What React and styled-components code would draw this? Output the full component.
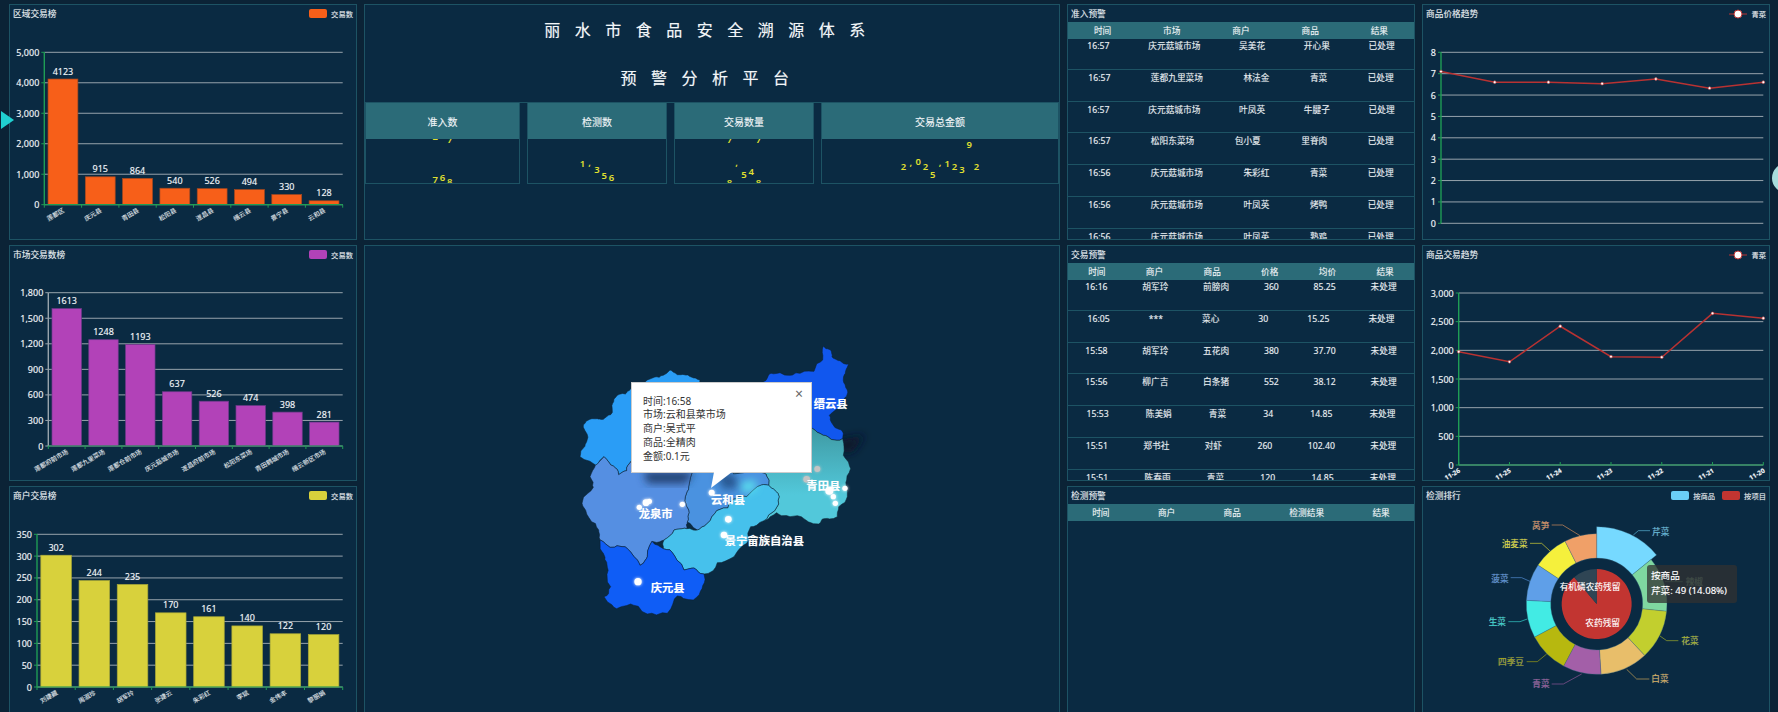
import React from 'react';
import styled, { createGlobalStyle } from 'styled-components';

const FONT = '"Noto Sans", "Noto Sans CJK SC", sans-serif';
const GRID = '#97a3ac';
const GREEN = '#1f9d55';
const RED = '#b83232';

const areaBars = [
  ['莲都区', 4123], ['庆元县', 915], ['青田县', 864], ['松阳县', 540],
  ['遂昌县', 526], ['缙云县', 494], ['景宁县', 330], ['云和县', 128],
];
const marketBars = [
  ['莲都府前市场', 1613], ['莲都九里菜场', 1248], ['莲都仓前市场', 1193], ['庆元菇城市场', 637],
  ['遂昌府前市场', 526], ['松阳东菜场', 474], ['青田鹤城市场', 398], ['缙云新区市场', 281],
];
const merchantBars = [
  ['刘建藏', 302], ['周淑珍', 244], ['胡军玲', 235], ['张建云', 170],
  ['朱彩红', 161], ['李斌', 140], ['金伟丰', 122], ['黎丽娟', 120],
];

const entryRows = [
  ['16:57', '庆元菇城市场', '吴美花', '开心果', '已处理'],
  ['16:57', '莲都九里菜场', '林法金', '青菜', '已处理'],
  ['16:57', '庆元菇城市场', '叶凤英', '牛腱子', '已处理'],
  ['16:57', '松阳东菜场', '包小夏', '里脊肉', '已处理'],
  ['16:56', '庆元菇城市场', '朱彩红', '青菜', '已处理'],
  ['16:56', '庆元菇城市场', '叶凤英', '烤鸭', '已处理'],
  ['16:56', '庆元菇城市场', '叶凤英', '熟鸡', '已处理'],
];
const tradeRows = [
  ['16:16', '胡军玲', '前膀肉', '360', '85.25', '未处理'],
  ['16:05', '***', '菜心', '30', '15.25', '未处理'],
  ['15:58', '胡军玲', '五花肉', '380', '37.70', '未处理'],
  ['15:56', '柳广吉', '白条猪', '552', '38.12', '未处理'],
  ['15:53', '陈美娟', '青菜', '34', '14.85', '未处理'],
  ['15:51', '郑书社', '对虾', '260', '102.40', '未处理'],
  ['15:51', '陈春雨', '青菜', '120', '14.85', '未处理'],
];

// frozen mid-roll: each column holds one or two glyphs with their y offset from the cell centre
const stats = [
  { label: '准入数', cols: [[['7', 18.5], ['2', -24]], [['6', 16.5]], [['8', 20.5], ['7', -21]]] },
  { label: '检测数', cols: [[['1', 2.5]], [[',', 2]], [['3', 8.5]], [['5', 14.5]], [['6', 16.5]]] },
  { label: '交易数量', cols: [[['8', 21.5], ['7', -21.5]], [[',', 2]], [['5', 13.5]], [['4', 10.5]], [['8', 21.5], ['7', -21.5]]] },
  {
    label: '交易总金额',
    cols: [[['2', 5.5]], [[',', 2]], [['0', 0.5]], [['2', 5.5]], [['5', 13.5]], [[',', 2]], [['1', 2.5]], [['2', 5.5]], [['3', 8.5]], [['9', -16.5]], [['2', 5.5]]],
  },
];

const regions = [
  { fill: '#2a9df6', pts: '60,350 72,322 82,298 70,262 78,244 112,236 130,238 152,224 158,190 168,170 196,162 212,146 240,142 262,120 298,112 330,90 352,104 372,104 396,112 420,120 430,260 400,340 300,370 215,362 200,392 176,404 160,378 132,350 108,376' },
  { fill: '#1157ee', pts: '790,18 812,30 816,50 840,62 866,72 856,100 850,122 862,150 850,182 838,206 808,226 816,250 844,270 848,296 824,300 790,286 757,265 640,200 610,125 628,102 660,98 690,106 720,100 762,94 788,60' },
  { fill: 'url(#tealFade)', pts: '640,200 757,265 790,286 824,300 848,296 850,346 872,386 860,420 862,470 836,500 832,530 792,536 776,552 746,546 690,530 650,518 612,542 656,492 650,456 626,436 618,402 560,404 520,402' },
  { fill: '#4a92e0', pts: '400,340 640,200 520,402 618,402 626,436 592,440 560,470 520,478 470,512 440,552 412,570 382,546 386,510 376,470 386,440' },
  { fill: '#558fe2', pts: '132,350 160,378 176,404 200,392 215,362 300,370 400,340 386,440 376,470 386,510 382,546 380,566 342,570 312,600 276,604 262,650 240,676 212,636 186,620 150,622 120,600 116,570 86,532 66,490 100,442 90,410 106,376' },
  { fill: '#46c1ec', pts: '312,600 342,570 380,566 412,570 440,552 470,512 520,478 560,470 592,440 626,436 650,456 656,492 612,542 572,560 560,610 522,650 472,668 432,702 402,684 372,690 340,642 310,626' },
  { fill: '#0f5df6', pts: '120,600 150,622 186,620 212,636 240,676 262,650 276,604 310,626 340,642 372,690 402,684 432,702 426,746 400,780 352,768 322,820 262,822 212,792 170,806 132,770 152,740 142,682 130,640' },
];
const mapLabels = [
  ['缙云县', 812, 190], ['青田县', 790, 435], ['云和县', 504, 477],
  ['龙泉市', 287, 520], ['景宁畲族自治县', 613, 602], ['庆元县', 323, 743],
];
const mapDots = [
  [455, 458, 9], [238, 502, 8], [258, 488, 10], [268, 484, 8], [367, 493, 8], [505, 538, 10], [492, 585, 10],
  [234, 725, 11], [855, 445, 8], [808, 452, 12], [820, 470, 8], [826, 490, 8],
];

const outerSlices = [
  { name: '芹菜', color: '#76d9ff', text: '#5bb7d9', from: 0, to: 50.7, grown: true, lead: '640,165 655,152 690,152', x: 722, y: 155 },
  { name: '辣椒', color: '#7fd8a0', text: '#5f9b7a', from: 50.7, to: 96, lead: '735,305 760,305 788,305', x: 823, y: 305 },
  { name: '花菜', color: '#c2cf2e', text: '#a5b12a', from: 96, to: 137, lead: '720,468 740,482 775,482', x: 810, y: 482 },
  { name: '白菜', color: '#e8be6a', text: '#d0a858', from: 137, to: 176.5, lead: '620,568 650,597 688,597', x: 720, y: 597 },
  { name: '青菜', color: '#a35fa8', text: '#95569a', from: 176.5, to: 208, lead: '485,582 430,612 395,612', x: 363, y: 612 },
  { name: '四季豆', color: '#b7b80f', text: '#a3a414', from: 208, to: 242, lead: '380,522 352,545 320,545', x: 273, y: 545 },
  { name: '生菜', color: '#42ebe4', text: '#36d4ce', from: 242, to: 273, lead: '322,417 300,425 265,425', x: 232, y: 425 },
  { name: '菠菜', color: '#5f9fe8', text: '#5590d8', from: 273, to: 303.6, lead: '332,305 305,293 272,293', x: 240, y: 296 },
  { name: '油麦菜', color: '#f5f03c', text: '#ddd835', from: 303.6, to: 333.3, lead: '390,213 365,190 330,190', x: 284, y: 192 },
  { name: '莴笋', color: '#f0a068', text: '#d98f5a', from: 333.3, to: 360, lead: '480,167 428,135 395,135', x: 362, y: 137 },
];

function polar(cx, cy, r, deg) {
  const a = (deg - 90) * Math.PI / 180;
  return [cx + r * Math.cos(a), cy + r * Math.sin(a)];
}

function arcPath(cx, cy, r0, r1, from, to) {
  const large = to - from > 180 ? 1 : 0;
  const [ax, ay] = polar(cx, cy, r1, from);
  const [bx, by] = polar(cx, cy, r1, to);
  const [cx2, cy2] = polar(cx, cy, r0, to);
  const [dx, dy] = polar(cx, cy, r0, from);
  return `M${ax} ${ay}A${r1} ${r1} 0 ${large} 1 ${bx} ${by}L${cx2} ${cy2}A${r0} ${r0} 0 ${large} 0 ${dx} ${dy}Z`;
}

function noise(x, y) {
  const s = Math.sin(x * 12.9898 + y * 78.233) * 43758.5453;
  return s - Math.floor(s) - 0.5;
}

// county borders: midpoint displacement keyed on the midpoint, so shared edges stay shared
function roughEdge(a, b, depth) {
  if (depth === 0) return [];
  const mx = (a[0] + b[0]) / 2;
  const my = (a[1] + b[1]) / 2;
  const len = Math.hypot(b[0] - a[0], b[1] - a[1]);
  const mid = [mx + noise(mx, my) * len * 0.3, my + noise(my, mx) * len * 0.3];
  return [...roughEdge(a, mid, depth - 1), mid, ...roughEdge(mid, b, depth - 1)];
}

function roughen(pts) {
  const list = pts.split(' ').map((p) => p.split(',').map(Number));
  const out = [];
  list.forEach((p, i) => {
    out.push(p, ...roughEdge(p, list[(i + 1) % list.length], 2));
  });
  return out.map((p) => p.map((n) => n.toFixed(1)).join(',')).join(' ');
}

function YAxis({ box, max, step, color }) {
  const ticks = [];
  for (let v = 0; v <= max; v += step) ticks.push(v);
  return (
    <>
      {ticks.map((v) => {
        const y = box.bottom - (v / max) * (box.bottom - box.top);
        return (
          <g key={v}>
            <line x1={box.left} x2={box.right} y1={y} y2={y} stroke={GRID} />
            <line x1={box.left - 3} x2={box.left} y1={y} y2={y} stroke={color} />
            <TickText x={box.left - 5} y={y}>{v.toLocaleString('en-US')}</TickText>
          </g>
        );
      })}
      <line x1={box.left} x2={box.left} y1={box.top} y2={box.bottom} stroke={color} strokeWidth="1.4" />
    </>
  );
}

// svg coordinates are relative to the panel's top left corner
function ChartSvg({ children }) {
  return <Plot viewBox="1 18 346 217">{children}</Plot>;
}

function BarChart({ box, max, step, data, color, edge, yColor = GREEN }) {
  const band = (box.right - box.left) / data.length;
  const h = box.bottom - box.top;
  return (
    <ChartSvg>
      <YAxis box={box} max={max} step={step} color={yColor} />
      {data.map(([name, value], i) => {
        const barH = (value / max) * h;
        const x = box.left + band * i;
        const mid = x + band / 2;
        return (
          <g key={name}>
            <rect x={x + band * 0.1} y={box.bottom - barH} width={band * 0.8} height={barH} fill={color} stroke={edge} strokeWidth="0.7" />
            <DataText x={mid} y={box.bottom - barH - 4.5}>{value}</DataText>
            <AxisText x={mid + 2} y={box.bottom + 7} transform={`rotate(-30 ${mid + 2} ${box.bottom + 7})`}>{name}</AxisText>
            <line x1={x} x2={x} y1={box.bottom} y2={box.bottom + 3} stroke={GREEN} />
          </g>
        );
      })}
      <line x1={box.right} x2={box.right} y1={box.bottom} y2={box.bottom + 3} stroke={GREEN} />
      <line x1={box.left} x2={box.right} y1={box.bottom} y2={box.bottom} stroke={GREEN} strokeWidth="1.2" />
    </ChartSvg>
  );
}

function LineChart({ box, max, step, values, labels }) {
  const pitch = (box.right - box.left) / (values.length - 1);
  const pts = values.map((v, i) => [box.left + pitch * i, box.bottom - (v / max) * (box.bottom - box.top)]);
  return (
    <ChartSvg>
      <YAxis box={box} max={max} step={step} color={GREEN} />
      {labels && (
        <line x1={box.left} x2={box.right} y1={box.bottom} y2={box.bottom} stroke={GREEN} strokeWidth="1.2" />
      )}
      {labels && labels.map((name, i) => (
        <g key={name}>
          <line x1={pts[i][0]} x2={pts[i][0]} y1={box.bottom} y2={box.bottom - 3} stroke={GREEN} />
          <DateText x={pts[i][0] + 2} y={box.bottom + 7} transform={`rotate(-30 ${pts[i][0] + 2} ${box.bottom + 7})`}>{name}</DateText>
        </g>
      ))}
      <polyline points={pts.map((p) => p.join(',')).join(' ')} fill="none" stroke={RED} strokeWidth="1.5" />
      {pts.map(([x, y]) => (
        <circle key={x} cx={x} cy={y} r="1.4" fill="#fff" stroke={RED} strokeWidth="0.6" />
      ))}
    </ChartSvg>
  );
}

function Donut() {
  const cx = 530;
  const cy = 372;
  return (
    <Plot viewBox="9 72 1038 651">
      {outerSlices.map((s) => (
        <g key={s.name}>
          <path d={arcPath(cx, cy, 138, s.grown ? 232 : 211, s.from, s.to)} fill={s.color} stroke="#3b6d86" strokeWidth="1" />
          <polyline points={s.lead} fill="none" stroke={s.text} strokeWidth="2" />
          <SliceText x={s.x} y={s.y} fill={s.text}>{s.name}</SliceText>
        </g>
      ))}
      <path d={arcPath(cx, cy, 0, 105, 0, 320)} fill="#c23531" />
      <path d={arcPath(cx, cy, 0, 105, 320, 360)} fill="#2f4554" />
      <SliceText x={510} y={320} fill="#fff">有机磷农药残留</SliceText>
      <SliceText x={548} y={430} fill="#fff">农药残留</SliceText>
    </Plot>
  );
}

function BarLegend({ color, children }) {
  return (
    <Legend>
      <Swatch $color={color} />
      {children}
    </Legend>
  );
}

function LineLegend() {
  return (
    <Legend>
      <svg width="18" height="10" viewBox="0 0 18 10">
        <line x1="0" x2="18" y1="5" y2="5" stroke={RED} />
        <circle cx="9" cy="5" r="4" fill="#fff" stroke={RED} />
      </svg>
      青菜
    </Legend>
  );
}

function ChartPanel({ title, legend, children }) {
  return (
    <Panel>
      <Head>
        <Title>{title}</Title>
        {legend}
      </Head>
      {children}
    </Panel>
  );
}

function TablePanel({ title, columns, rows }) {
  return (
    <Panel>
      <Head>
        <Title>{title}</Title>
      </Head>
      <TableHead>
        {columns.map((c) => <span key={c}>{c}</span>)}
      </TableHead>
      <TableBody>
        {rows.map((row, i) => (
          <TableRow key={i}>
            {row.map((c, j) => <span key={j}>{c}</span>)}
          </TableRow>
        ))}
      </TableBody>
    </Panel>
  );
}

function MapView() {
  return (
    <MapWrap>
      <MapSvg viewBox="0 0 960 870">
        <defs>
          <linearGradient id="tealFade" x1="0" y1="0" x2="0" y2="1">
            <stop offset="0" stopColor="#37878f" />
            <stop offset="0.35" stopColor="#45a8b4" />
            <stop offset="0.75" stopColor="#52c8da" />
          </linearGradient>
          <filter id="soft" x="-40%" y="-40%" width="180%" height="180%">
            <feGaussianBlur stdDeviation="12" />
          </filter>
          <filter id="glow" x="-80%" y="-80%" width="260%" height="260%">
            <feGaussianBlur stdDeviation="4" result="halo" />
            <feMerge>
              <feMergeNode in="halo" />
              <feMergeNode in="SourceGraphic" />
            </feMerge>
          </filter>
        </defs>
        <polygon points="828,300 915,285 880,335 842,340" fill="#08182a" filter="url(#soft)" />
        {regions.map((r) => (
          <polygon key={r.pts} points={roughen(r.pts)} fill={r.fill} stroke="#0b2030" strokeWidth="1.6" strokeLinejoin="round" />
        ))}
        <polygon points="250,395 400,395 380,430 262,430" fill="#223f6e" filter="url(#soft)" />
        <polygon points="470,400 520,400 540,440 490,450" fill="#28578f" filter="url(#soft)" />
        <polygon points="540,430 585,420 590,445 552,462" fill="#5ce6ee" filter="url(#soft)" />
        <circle cx="772" cy="387" r="9" fill="#c4c4c4" filter="url(#glow)" />
        <circle cx="740" cy="418" r="10" fill="#c4c4c4" filter="url(#glow)" />
        {mapDots.map(([x, y, r]) => (
          <circle key={`${x}-${y}`} cx={x} cy={y} r={r} fill="#fff" filter="url(#glow)" />
        ))}
        {mapLabels.map(([name, x, y]) => (
          <MapText key={name} x={x} y={y}>{name}</MapText>
        ))}
      </MapSvg>
      <Popup>
        <PopupClose>×</PopupClose>
        <div>时间:16:58</div>
        <div>市场:云和县菜市场</div>
        <div>商户:吴式平</div>
        <div>商品:全精肉</div>
        <div>金额:0.1元</div>
        <PopupTip viewBox="0 0 24 18">
          <polygon points="4,0 22,0 1,16" fill="#fff" />
        </PopupTip>
      </Popup>
    </MapWrap>
  );
}

export default function App() {
  return (
    <>
      <GlobalStyle />
      <Page>
        <ChartPanel title="区域交易榜" legend={<BarLegend color="#f75f19">交易数</BarLegend>}>
          <BarChart box={{ left: 35.3, top: 48.3, bottom: 200.7, right: 333.7 }} max={5000} step={1000} data={areaBars} color="#f75f19" edge="#a8491f" />
        </ChartPanel>

        <Panel>
          <Heading>
            <div>丽水市食品安全溯源体系</div>
            <div>预警分析平台</div>
          </Heading>
          <StatRow>
            {stats.map((s) => (
              <Stat key={s.label}>
                <StatHead>{s.label}</StatHead>
                <StatValue>
                  {s.cols.map((col, i) => (
                    <DigitCol key={i}>
                      {col.map(([glyph, y], j) => <Digit key={j} $y={y}>{glyph}</Digit>)}
                    </DigitCol>
                  ))}
                </StatValue>
              </Stat>
            ))}
          </StatRow>
        </Panel>

        <TablePanel title="准入预警" columns={['时间', '市场', '商户', '商品', '结果']} rows={entryRows} />

        <ChartPanel title="商品价格趋势" legend={<LineLegend />}>
          <LineChart box={{ left: 19, top: 48.3, bottom: 219.3, right: 341.3 }} max={8} step={1} values={[7.1, 6.6, 6.6, 6.53, 6.75, 6.32, 6.6]} />
        </ChartPanel>

        <ChartPanel title="市场交易数榜" legend={<BarLegend color="#b242b8">交易数</BarLegend>}>
          <BarChart box={{ left: 39.3, top: 47.7, bottom: 201, right: 333.7 }} max={1800} step={300} data={marketBars} color="#b242b8" edge="#6f3a8c" yColor={GRID} />
        </ChartPanel>

        <MapPanel>
          <MapView />
        </MapPanel>

        <TablePanel title="交易预警" columns={['时间', '商户', '商品', '价格', '均价', '结果']} rows={tradeRows} />

        <ChartPanel title="商品交易趋势" legend={<LineLegend />}>
          <LineChart box={{ left: 36.7, top: 48, bottom: 220, right: 341.3 }} max={3000} step={500} values={[1975, 1800, 2420, 1890, 1880, 2645, 2560]} labels={['11-26', '11-25', '11-24', '11-23', '11-22', '11-21', '11-20']} />
        </ChartPanel>

        <ChartPanel title="商户交易榜" legend={<BarLegend color="#d8d13c">交易数</BarLegend>}>
          <BarChart box={{ left: 28, top: 48.3, bottom: 201, right: 333.7 }} max={350} step={50} data={merchantBars} color="#d8d13c" edge="#a8a838" />
        </ChartPanel>

        <TablePanel title="检测预警" columns={['时间', '商户', '商品', '检测结果', '结果']} rows={[]} />

        <ChartPanel
          title="检测排行"
          legend={(
            <LegendGroup>
              <BarLegend color="#6bcdf5">按商品</BarLegend>
              <BarLegend color="#c23531">按项目</BarLegend>
            </LegendGroup>
          )}
        >
          <Donut />
          <ChartTip>
            <div>按商品</div>
            <div>芹菜: 49 (14.08%)</div>
          </ChartTip>
        </ChartPanel>

        <SideArrow />
        <SideKnob />
      </Page>
    </>
  );
}

const GlobalStyle = createGlobalStyle`
  html, body {
    margin: 0;
    height: 100%;
    background: #0b2336;
    overflow: hidden;
  }
`;

const Page = styled.div`
  position: relative;
  width: 1778px;
  height: 712px;
  overflow: hidden;
  box-sizing: border-box;
  padding: 4px 0 0 9px;
  display: grid;
  grid-template-columns: 348px 696px 348px 348px;
  grid-template-rows: 236px 236px 236px;
  gap: 5px 7px;
  background: #0b2336;
  font-family: ${FONT};
  color: #dfe6ea;
  text-shadow: 0 0 0.7px rgba(255, 255, 255, 0.45);
`;

const Panel = styled.section`
  position: relative;
  box-sizing: border-box;
  min-width: 0;
  overflow: hidden;
  border: 1px solid #1d5364;
  background: #0a2a42;
`;

const MapPanel = styled(Panel)`
  grid-row: span 2;
  padding: 94px 0 0 195px;
`;

const Head = styled.header`
  height: 17px;
  padding: 0 3px;
  display: flex;
  align-items: center;
  justify-content: space-between;
`;

const Title = styled.h2`
  margin: 0;
  font-size: 8.7px;
  font-weight: 400;
  color: #e6ecef;
`;

const Legend = styled.div`
  display: flex;
  align-items: center;
  gap: 4px;
  font-size: 7.3px;
  color: #e4e9ec;
`;

const LegendGroup = styled.div`
  display: flex;
  gap: 7px;
`;

const Swatch = styled.i`
  display: block;
  width: 18px;
  height: 9.5px;
  border-radius: 2px;
  background: ${(p) => p.$color};
`;

const Plot = styled.svg`
  display: block;
  width: 346px;
  height: 217px;
`;

const TickText = styled.text`
  font-size: 9px;
  fill: #eef3f6;
  text-anchor: end;
  dominant-baseline: central;
`;

const DataText = styled.text`
  font-size: 9px;
  fill: #eef3f6;
  text-anchor: middle;
`;

const AxisText = styled.text`
  font-size: 6.3px;
  fill: #e2e8ec;
  text-anchor: end;
`;

const DateText = styled.text`
  font-size: 6.4px;
  font-weight: 700;
  fill: #eef3f6;
  text-anchor: end;
`;

const SliceText = styled.text`
  font-size: 26px;
  text-anchor: middle;
  dominant-baseline: central;
`;

const ChartTip = styled.div`
  position: absolute;
  left: 224px;
  top: 78px;
  width: 89.5px;
  height: 38px;
  box-sizing: border-box;
  padding: 3px 4px;
  border-radius: 3px;
  background: rgba(50, 50, 50, 0.75);
  color: #fff;
  font-size: 9.6px;
  line-height: 15px;
  white-space: nowrap;
`;

const TableHead = styled.div`
  height: 17px;
  display: flex;
  align-items: center;
  justify-content: space-around;
  background: #2b6b78;
  font-size: 8.7px;
  color: #eef3f5;
`;

const TableBody = styled.div`
  margin-top: -1px;
`;

const TableRow = styled.div`
  box-sizing: border-box;
  height: 31.8px;
  display: flex;
  justify-content: space-around;
  border-bottom: 1px solid #1d5364;
  font-size: 8.7px;
  line-height: 17px;
  color: #e6ecef;
`;

const Heading = styled.div`
  height: 96px;
  padding-top: 1px;
  border-bottom: 1px solid #1d5364;
  text-align: center;
  font-size: 16px;
  line-height: 48px;
  letter-spacing: 14.5px;
  color: #f2f6f8;
`;

const StatRow = styled.div`
  display: grid;
  grid-template-columns: 155px 140px 140px 1fr;
  gap: 7px;
`;

const Stat = styled.div`
  box-sizing: border-box;
  height: 81px;
  display: flex;
  flex-direction: column;
  border: 1px solid #1d5364;
  border-top: 0;
`;

const StatHead = styled.div`
  height: 36px;
  display: flex;
  align-items: center;
  justify-content: center;
  background: #2b6b78;
  font-size: 10px;
  color: #eef3f5;
`;

const StatValue = styled.div`
  flex: 1;
  overflow: hidden;
  display: flex;
  align-items: center;
  justify-content: center;
`;

const DigitCol = styled.span`
  position: relative;
  width: 7.3px;
  height: 12px;
`;

const Digit = styled.span`
  position: absolute;
  left: 0;
  width: 100%;
  text-align: center;
  font-size: 9.5px;
  font-weight: 600;
  line-height: 12px;
  color: #e0e030;
  text-shadow: none;
  transform: translateY(${(p) => p.$y}px);
`;

const MapWrap = styled.div`
  position: relative;
  width: 320px;
  height: 290px;
`;

const MapSvg = styled.svg`
  display: block;
  width: 320px;
  height: 290px;
`;

const MapText = styled.text`
  font-size: 34px;
  font-weight: 700;
  fill: #fff;
  text-anchor: middle;
  dominant-baseline: central;
`;

const Popup = styled.div`
  position: absolute;
  left: 71px;
  top: 41.5px;
  width: 181px;
  height: 91px;
  box-sizing: border-box;
  padding: 12px 11px;
  background: #fff;
  border: 1px solid #ccc;
  color: #333;
  font-size: 10px;
  line-height: 13.8px;
  text-shadow: none;
`;

const PopupClose = styled.span`
  position: absolute;
  right: 8px;
  top: 4px;
  font-size: 14px;
  line-height: 14px;
  color: #666;
`;

const PopupTip = styled.svg`
  position: absolute;
  left: 78px;
  top: 89px;
  width: 24px;
  height: 18px;
`;

const SideArrow = styled.div`
  position: absolute;
  left: 1px;
  top: 111px;
  width: 0;
  height: 0;
  border-left: 13px solid #20d0d0;
  border-top: 9px solid transparent;
  border-bottom: 9px solid transparent;
`;

const SideKnob = styled.div`
  position: absolute;
  left: 1772px;
  top: 163px;
  width: 30px;
  height: 30px;
  border-radius: 50%;
  background: #a8dcdc;
`;
